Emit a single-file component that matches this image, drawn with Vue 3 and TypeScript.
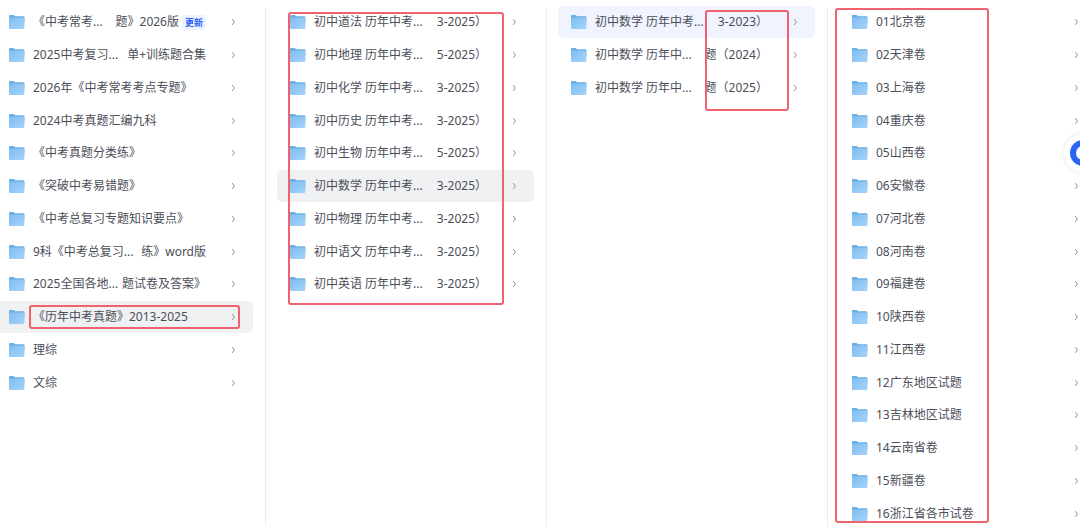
<script setup lang="ts">
import { ref } from 'vue'

interface Entry {
  head: string
  tail?: string
  badge?: string
}

interface Column {
  label: string
  mark: string
  tone: 'grey' | 'blue'
  entries: Entry[]
}

const subjects: [string, string][] = [
  ['道法', '3'],
  ['地理', '5'],
  ['化学', '3'],
  ['历史', '3'],
  ['生物', '5'],
  ['数学', '3'],
  ['物理', '3'],
  ['语文', '3'],
  ['英语', '3'],
]

const regions: string[] = [
  '01北京卷', '02天津卷', '03上海卷', '04重庆卷',
  '05山西卷', '06安徽卷', '07河北卷', '08河南卷',
  '09福建卷', '10陕西卷', '11江西卷', '12广东地区试题',
  '13吉林地区试题', '14云南省卷', '15新疆卷', '16浙江省各市试卷',
]

const columns: Column[] = [
  {
    label: '资料合集',
    mark: 'mark-folder',
    tone: 'grey',
    entries: [
      { head: '《中考常考...', tail: '题》2026版', badge: '更新' },
      { head: '2025中考复习...', tail: '单+训练题合集' },
      { head: '2026年《中考常考考点专题》' },
      { head: '2024中考真题汇编九科' },
      { head: '《中考真题分类练》' },
      { head: '《突破中考易错题》' },
      { head: '《中考总复习专题知识要点》' },
      { head: '9科《中考总复习...', tail: '练》word版' },
      { head: '2025全国各地...', tail: '题试卷及答案》' },
      { head: '《历年中考真题》2013-2025' },
      { head: '理综' },
      { head: '文综' },
    ],
  },
  {
    label: '历年中考真题',
    mark: 'mark-subjects',
    tone: 'grey',
    entries: subjects.map(([name, digit]) => ({
      head: `初中${name} 历年中考...`,
      tail: `${digit}-2025）`,
    })),
  },
  {
    label: '初中数学',
    mark: 'mark-years',
    tone: 'blue',
    entries: [
      { head: '初中数学 历年中考...', tail: '3-2023）' },
      { head: '初中数学 历年中...', tail: '题（2024）' },
      { head: '初中数学 历年中...', tail: '题（2025）' },
    ],
  },
  {
    label: '地区试卷',
    mark: 'mark-regions',
    tone: 'grey',
    entries: regions.map((head) => ({ head })),
  },
]

const selected = ref<number[]>([9, 5, 0, -1])
</script>

<template>
  <main class="viewer">
    <svg class="defs" aria-hidden="true">
      <defs>
        <linearGradient id="folder-front" x1="0" y1="0" x2="1" y2="1">
          <stop offset="0" stop-color="#80bdf0" />
          <stop offset="1" stop-color="#a5d3fb" />
        </linearGradient>
      </defs>
    </svg>
    <div class="board">
      <nav v-for="(column, c) in columns" :key="column.label" class="column" :aria-label="column.label">
        <ul class="list">
          <li v-for="(entry, i) in column.entries" :key="i" class="item">
            <button
              type="button"
              class="row"
              :class="selected[c] === i ? column.tone : ''"
              @click="selected[c] = i"
            >
              <svg class="folder" viewBox="0 0 17 16" aria-hidden="true">
                <path d="M1 2Q1 1 2 1H5.4Q6 1 6.4 1.5L7 2.2H15.4Q16.4 2.2 16.4 3.2V9H1Z" fill="#67aee3" />
                <path d="M1 4Q1 3.6 1.6 3.6H15.8Q16.4 3.6 16.4 4.2V14Q16.4 15 15.4 15H2Q1 15 1 14Z" fill="url(#folder-front)" />
              </svg>
              <span class="title">
                <span class="name">
                  <span>{{ entry.head }}</span>
                  <span v-if="entry.tail">{{ entry.tail }}</span>
                </span>
                <span v-if="entry.badge" class="badge">{{ entry.badge }}</span>
              </span>
              <svg class="chevron" viewBox="0 0 5 8" aria-hidden="true">
                <path d="M1 1.2Q3.2 2.6 3.2 4Q3.2 5.4 1 6.8" fill="none" stroke="#8b8e96" stroke-width="1" />
              </svg>
            </button>
          </li>
        </ul>
        <span class="mark" :class="column.mark" aria-hidden="true"></span>
      </nav>
    </div>
    <button type="button" class="assistant" aria-label="助手">
      <svg viewBox="0 0 38 38" aria-hidden="true">
        <circle cx="19" cy="19" r="10" fill="none" stroke="#2b65f6" stroke-width="6" />
      </svg>
    </button>
  </main>
</template>

<style>
body {
  margin: 0;
  background: #fff;
}
</style>

<style scoped>
.viewer {
  position: relative;
  height: 100vh;
  overflow: hidden;
  background: #fff;
  color: #4b4e59;
  font-family: "Noto Sans", "Noto Sans CJK SC", sans-serif;
  font-size: 12px;
  line-height: 18px;
}

.defs {
  position: absolute;
  width: 0;
  height: 0;
}

.board {
  display: grid;
  grid-template-columns: repeat(4, minmax(0, 1fr));
  width: calc(100% + 44px);
  height: 100%;
  margin-left: -15px;
}

.column {
  position: relative;
  background: linear-gradient(#ebecee, #ebecee) right 8px / 1px 100% no-repeat;
}

.list {
  display: grid;
  grid-auto-rows: 33px 33px 33px 32px;
  margin: 0;
  padding: 6px 13px 0 11px;
  list-style: none;
}

.item {
  display: flex;
}

.row {
  display: flex;
  flex: 1;
  align-items: center;
  min-width: 0;
  margin: 0 0 1px;
  padding: 0 17px 0 12px;
  border: 0;
  border-radius: 5px;
  background: none;
  color: inherit;
  font: inherit;
  text-align: left;
  white-space: nowrap;
  cursor: pointer;
}

.row.grey {
  background: #f0f1f3;
}

.row.blue {
  background: #f0f4ff;
}

.folder {
  flex: none;
  width: 17px;
  height: 16px;
  margin-right: 8px;
}

.title {
  display: flex;
  flex: 1;
  align-items: center;
  gap: 3px;
  min-width: 0;
  margin-right: 25px;
}

.name {
  display: flex;
  flex: 1;
  justify-content: space-between;
  min-width: 0;
}

.badge {
  padding: 0 3px;
  border-radius: 3px;
  background: #eef3ff;
  color: #2a63f5;
  font-size: 9px;
  font-weight: 700;
  line-height: 15px;
}

.chevron {
  flex: none;
  width: 5px;
  height: 8px;
}

.mark {
  position: absolute;
  box-sizing: border-box;
  border: 2px solid #f0626e;
  border-radius: 3px;
  pointer-events: none;
}

.mark-folder {
  top: 305px;
  left: 44px;
  width: 211px;
  height: 24px;
}

.mark-subjects {
  top: 12px;
  left: 22px;
  width: 216px;
  height: 293px;
}

.mark-years {
  top: 10px;
  left: 158px;
  width: 84px;
  height: 101px;
}

.mark-regions {
  top: 8px;
  left: 7px;
  width: 154px;
  height: 515px;
}

.assistant {
  position: absolute;
  top: 134px;
  right: -22px;
  width: 38px;
  height: 38px;
  padding: 0;
  border: 0;
  border-radius: 50%;
  background: #fff;
  box-shadow: 0 0 4px rgba(0, 0, 0, 0.12);
  cursor: pointer;
}

.assistant svg {
  display: block;
  width: 38px;
  height: 38px;
}
</style>
